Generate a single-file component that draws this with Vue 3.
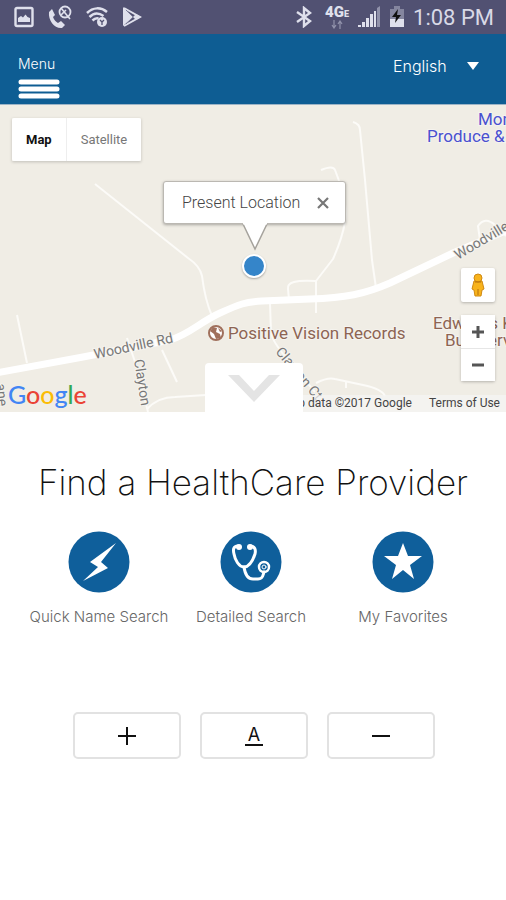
<template>
  <div class="page">
    <div class="statusbar">
      <div class="status-left">
        <svg class="icon" width="20" height="22" viewBox="0 0 20 22">
          <rect x="1.500" y="2" width="17" height="18" rx="1.500" fill="none" stroke="#dfe0ec" stroke-width="2.400" />
          <path d="M4 16v-4l3-2 2 1.500 2.500-3 2 2.500 2.500 1v4z" fill="#dfe0ec" />
        </svg>
        <svg class="icon" width="24" height="24" viewBox="0 0 24 24">
          <path d="M1 7l3-3 3 6-2 2c1 3 3 5 5 6l3-2 4 4-3 3C7 24 0 16 1 7z" fill="#dfe0ec" />
          <circle cx="17" cy="7" r="5.500" fill="none" stroke="#dfe0ec" stroke-width="1.800" />
          <path d="M13 3l9 11M13 10l5-5" stroke="#dfe0ec" stroke-width="1.600" />
        </svg>
        <svg class="icon" width="22" height="22" viewBox="0 0 22 22">
          <g fill="none" stroke="#dfe0ec" stroke-width="2.500">
            <path d="M1 7C7 1 15 1 21 6" />
            <path d="M3.500 11c4-4 9-4.500 14-1" />
            <path d="M6.500 14.500c2-2 4-2.500 6-2" />
          </g>
          <circle cx="16" cy="16" r="5" fill="#dfe0ec" />
          <path d="M14 14l2 2 2-2M16 16v3" fill="none" stroke="#515172" stroke-width="1.300" />
        </svg>
        <svg class="icon" width="20" height="22" viewBox="0 0 20 22">
          <path d="M1 1v19L11 11z" fill="#dfe0ec" />
          <path d="M2 2l16 9L2 20" fill="none" stroke="#dfe0ec" stroke-width="2" />
          <path d="M14 8l5 3-5 3-3-3z" fill="#dfe0ec" />
          <path d="M4 4l7 7-7 7" fill="none" stroke="#7d7e99" />
        </svg>
      </div>
      <div class="status-right">
        <svg class="icon" width="18" height="22" viewBox="0 0 18 22">
          <path d="M2 6l13 9-6 5V2l6 5L2 16" fill="none" stroke="#dfe0ec" stroke-width="2.400" />
        </svg>
        <div class="network">
          <span class="lte">4G<small>E</small></span>
          <svg width="12" height="9" viewBox="0 0 12 9">
            <path d="M3 0v8M1 5l2 3 2-3M9 9V1M7 4l2-3 2 3" fill="none" stroke="#9192ab" stroke-width="1.200" />
          </svg>
        </div>
        <svg class="icon" width="24" height="22" viewBox="0 0 24 22">
          <path d="M1 19h3v2H1zM5 16h3v5H5zM9 12h3v9H9zM13 8h3v13h-3zM17 5h2v16h-2z" fill="#dfe0ec" />
          <path d="M20 2l3-2v21h-3z" fill="#9192ab" />
        </svg>
        <svg class="icon" width="16" height="22" viewBox="0 0 16 22">
          <path d="M1 3h4V0h6v3h4v11H1z" fill="#85869f" />
          <path d="M1 13h14v8H1z" fill="#dfe0ec" />
          <path d="M9 3L3 11h4l-1 6 6-8H8z" fill="#111" />
        </svg>
        <span class="clock">1:08 PM</span>
      </div>
    </div>

    <header class="header">
      <button class="menu">
        <span>Menu</span>
        <svg width="42" height="20" viewBox="0 0 42 20">
          <path d="M3 3h36M3 10h36M3 17h36" stroke="#fff" stroke-width="5" stroke-linecap="round" />
        </svg>
      </button>
      <div class="language">
        <select v-model="language" aria-label="Language">
          <option>English</option>
          <option>Español</option>
        </select>
        <svg class="caret" width="12" height="8" viewBox="0 0 12 8"><path d="M0 0h12L6 8z" fill="#fff" /></svg>
      </div>
    </header>

    <section class="map">
      <svg class="roads" viewBox="0 105 506 307" preserveAspectRatio="xMinYMin slice">
        <g fill="none" stroke="#fcfbf8" stroke-width="2" stroke-linejoin="round">
          <path v-for="road in roads" :key="road" :d="road" />
        </g>
        <path d="M-4 373L83 357L170 340C190 334 200 322 220 313S245 302 262 301L310 299C345 298 365 294 390 283L453 253L510 229" fill="none" stroke="#fff" stroke-width="7" />
        <g class="street">
          <text transform="translate(95 359) rotate(-12)">Woodville Rd</text>
          <text transform="translate(458 260) rotate(-31)">Woodville Rd</text>
          <text transform="translate(134 360) rotate(81)">Clayton</text>
          <text transform="translate(275 352) rotate(50)">Clayton Ct</text>
          <text transform="translate(-4 384) rotate(84)">ane</text>
        </g>
        <g class="place">
          <text x="228" y="339">Positive Vision Records</text>
          <text x="433" y="329">Edwards K</text>
          <text x="445" y="346">Bus Service</text>
        </g>
        <g class="shop">
          <text x="478" y="125">Monroe</text>
          <text x="427" y="142">Produce &amp; More</text>
        </g>
        <circle cx="216" cy="333" r="7" fill="#fff" stroke="#a0705c" stroke-width="2" />
        <path d="M210 331l3-4 4 1-1 4 4 2 1 4-5 1-2-5zM218 328l4 3-2 1z" fill="#a0705c" />
      </svg>

      <div class="map-types">
        <button v-for="type in mapTypes" :key="type" :class="{ current: type === mapType }" @click="mapType = type">{{ type }}</button>
      </div>

      <div class="marker">
        <div v-if="showInfo" class="info">
          <span>Present Location</span>
          <button aria-label="Close" @click="showInfo = false">
            <svg width="12" height="12" viewBox="0 0 12 12"><path d="M1 1l10 10M11 1L1 11" stroke="#777" stroke-width="2.200" /></svg>
          </button>
          <svg class="tail" width="26" height="28" viewBox="0 0 26 28">
            <path d="M1 1l12 25L25 1" fill="#fff" stroke="#a5a29c" stroke-width="1.500" />
            <path d="M1 0h24" stroke="#fff" stroke-width="3" />
          </svg>
        </div>
        <div class="dot"></div>
      </div>

      <div class="controls">
        <button class="pegman" aria-label="Street View">
          <svg width="14" height="24" viewBox="0 0 14 24">
            <path d="M3 8h8l2 8-2 1-1 6H4l-1-6-2-1z" fill="#f8b31c" stroke="#cf8912" />
            <circle cx="7" cy="5" r="4" fill="#f8b31c" stroke="#cf8912" />
            <path d="M4 9h6M7 16v6" stroke="#b5700c" />
          </svg>
        </button>
        <div class="zoom">
          <button aria-label="Zoom in" @click="zoom++">
            <svg width="14" height="14" viewBox="0 0 14 14"><path d="M7 1v12M1 7h12" stroke="#555" stroke-width="3" /></svg>
          </button>
          <button aria-label="Zoom out" @click="zoom--">
            <svg width="14" height="14" viewBox="0 0 14 14"><path d="M1 7h12" stroke="#555" stroke-width="3" /></svg>
          </button>
        </div>
      </div>

      <div class="google"><span class="b">G</span><span class="r">o</span><span class="y">o</span><span class="b">g</span><span class="g">l</span><span class="r">e</span></div>
      <div class="legal">
        <span>Map data ©2017 Google</span>
        <a href="#">Terms of Use</a>
      </div>
      <button class="pull" aria-label="Expand map">
        <svg width="52" height="30" viewBox="0 0 52 30"><path d="M0 2h11l15 16L41 2h11L26 29z" fill="#e4e4e4" /></svg>
      </button>
    </section>

    <main class="content">
      <h1>Find a HealthCare Provider</h1>
      <nav class="searches">
        <a href="#">
          <svg width="62" height="62" viewBox="0 0 62 62">
            <circle cx="31" cy="31" r="30.500" fill="#0f5f9b" />
            <path d="M48 12L22 31l8 5-15 14 25-13-7-6z" fill="#fff" />
          </svg>
          <span>Quick Name Search</span>
        </a>
        <a href="#">
          <svg width="62" height="62" viewBox="0 0 62 62">
            <circle cx="31" cy="31" r="30.500" fill="#0f5f9b" />
            <g fill="none" stroke="#fff" stroke-width="3" stroke-linecap="round" stroke-linejoin="round">
              <path d="M18 15c-5 0-5 4-4 8 1 6 5 13 10 13s9-7 11-13c1-4 0-8-5-8" />
              <path d="M24 36c1 7 4 12 9 12h5c5 0 5-4 6-7" />
              <circle cx="44" cy="36" r="5" stroke-width="2.500" />
              <circle cx="44" cy="36" r="2" stroke-width="1" />
            </g>
            <circle cx="19" cy="16" r="3" fill="#fff" />
            <circle cx="30" cy="16" r="3" fill="#fff" />
          </svg>
          <span>Detailed Search</span>
        </a>
        <a href="#">
          <svg width="62" height="62" viewBox="0 0 62 62">
            <circle cx="31" cy="31" r="30.500" fill="#0f5f9b" />
            <path d="M31 12l5 13h14L38 34l4 14-11-9-11 9 4-14-12-9h14z" fill="#fff" />
          </svg>
          <span>My Favorites</span>
        </a>
      </nav>
      <div class="textsize">
        <button aria-label="Larger text">
          <svg width="18" height="18" viewBox="0 0 18 18"><path d="M9 0v18M0 9h18" stroke="#111" stroke-width="2" /></svg>
        </button>
        <button aria-label="Default text"><span class="letter">A</span></button>
        <button aria-label="Smaller text">
          <svg width="18" height="18" viewBox="0 0 18 18"><path d="M0 9h18" stroke="#111" stroke-width="2" /></svg>
        </button>
      </div>
    </main>
  </div>
</template>

<script setup>
import { ref } from 'vue'

const language = ref('English')
const mapTypes = ['Map', 'Satellite']
const mapType = ref('Map')
const showInfo = ref(true)
const zoom = ref(15)

// side roads, drawn under the main one
const roads = [
  'M17 315L27 363',
  'M95 184L188 258Q200 266 202 276Q205 300 212 316',
  'M353 122Q360 124 360 130L365 180L372 260L376 288',
  'M321 170Q333 165 335 170L338 178Q348 205 345 222T333 259L316 281V313',
  'M316 281Q286 279 288 289L289 300',
  'M270 304L271 332Q272 342 290 362L315 392',
  'M316 383Q328 377 335 379L363 385Q382 389 385 396M346 382V388',
  'M127 338L136 365L148 412',
  'M162 350L177 382',
  'M147 409Q158 397 175 397L206 395',
  'M480 240L478 226Q485 216 495 225L506 236'
]
</script>

<style>
body {
  margin: 0;
  background: #fff;
}
</style>

<style scoped>
.page {
  font-family: Roboto, "Liberation Sans", sans-serif;
  color: #111;
}
button {
  border: 0;
  padding: 0;
  margin: 0;
  background: #fff;
  font-family: inherit;
  display: flex;
  align-items: center;
  justify-content: center;
}
.statusbar {
  height: 34px;
  background: #515172;
  display: flex;
  justify-content: space-between;
  align-items: center;
  padding: 0 12px 0 14px;
}
.status-left {
  display: flex;
  align-items: center;
  gap: 14px;
}
.status-right {
  display: flex;
  align-items: center;
  gap: 8px;
}
.network {
  display: flex;
  flex-direction: column;
  align-items: center;
  padding-left: 4px;
}
.lte {
  font-size: 15px;
  line-height: 12px;
  font-weight: 900;
  color: #dfe0ec;
}
.lte small {
  font-size: 9px;
}
.clock {
  font-size: 22px;
  line-height: 34px;
  padding-top: 2px;
  color: #d8d9e6;
}
.header {
  height: 70px;
  background: #0e5d93;
  border-bottom: 1px solid #9db4c6;
  display: flex;
  justify-content: space-between;
  padding: 0 27px 0 18px;
  font-family: Inter, "Liberation Sans", sans-serif;
}
.menu {
  background: none;
  color: #fff;
  flex-direction: column;
  align-items: flex-start;
  justify-content: flex-start;
  padding-top: 21px;
  gap: 6px;
  font-size: 14px;
  line-height: 18px;
  font-weight: 300;
}
.language {
  display: flex;
  align-items: center;
  gap: 15px;
  padding-bottom: 6px;
}
.language select {
  appearance: none;
  border: 0;
  padding: 0;
  background: none;
  color: #fff;
  font-family: inherit;
  font-size: 16px;
  font-weight: 300;
}
.language option {
  color: #111;
}
.map {
  position: relative;
  height: 307px;
  overflow: hidden;
  background: #f0ede5;
}
.roads {
  display: block;
  width: 100%;
  height: 100%;
}
.roads text {
  paint-order: stroke;
  stroke: #f5f3ee;
  stroke-width: 2px;
}
.street text {
  font-size: 14px;
  fill: #777;
}
.place text {
  font-size: 17px;
  fill: #8d6453;
}
.shop text {
  font-size: 17px;
  fill: #4a50d0;
}
.map-types {
  position: absolute;
  top: 13px;
  left: 12px;
  display: flex;
  box-shadow: 0 1px 3px rgba(0, 0, 0, 0.2);
}
.map-types button {
  height: 43px;
  padding: 0 14px;
  font-size: 13px;
  color: #777;
  border-radius: 0 2px 2px 0;
}
.map-types .current {
  color: #111;
  font-weight: 700;
  border-right: 1px solid #eee;
  border-radius: 2px 0 0 2px;
}
.marker {
  position: absolute;
  top: 76px;
  left: 50%;
  width: 183px;
  height: 99px;
  margin-left: -90px;
}
.info {
  position: relative;
  height: 43px;
  box-sizing: border-box;
  display: flex;
  align-items: center;
  justify-content: space-between;
  padding: 0 16px 0 18px;
  background: #fff;
  border: 1px solid #bbb8b2;
  border-radius: 3px;
  box-shadow: 0 1px 3px rgba(0, 0, 0, 0.3);
  font-size: 16px;
  font-weight: 300;
  color: #444;
}
.tail {
  position: absolute;
  top: 41px;
  left: 78px;
}
.dot {
  position: absolute;
  left: 79px;
  bottom: 2px;
  width: 20px;
  height: 20px;
  border: 2px solid #fff;
  border-radius: 50%;
  background: #3585c9;
  box-shadow: 0 1px 2px rgba(0, 0, 0, 0.3);
}
.controls {
  position: absolute;
  top: 163px;
  right: 11px;
  display: flex;
  flex-direction: column;
  gap: 13px;
}
.pegman,
.zoom {
  width: 34px;
  box-shadow: 0 1px 3px rgba(0, 0, 0, 0.25);
  border-radius: 2px;
}
.pegman {
  height: 34px;
}
.zoom button {
  width: 34px;
  height: 33px;
}
.zoom button + button {
  border-top: 1px solid #e6e6e6;
}
.google {
  position: absolute;
  left: 8px;
  bottom: 4px;
  font-family: Lato, sans-serif;
  font-size: 25px;
  line-height: 28px;
  font-weight: 500;
}
.b { color: #4285f4; }
.r { color: #ea4335; }
.y { color: #fbbc05; }
.g { color: #34a853; }
.legal {
  position: absolute;
  right: 0;
  bottom: 0;
  display: flex;
  gap: 17px;
  padding: 0 6px;
  background: rgba(245, 245, 245, 0.7);
  font-size: 12px;
  line-height: 17px;
  color: #444;
}
.legal a {
  color: inherit;
  text-decoration: none;
}
.pull {
  position: absolute;
  left: 50%;
  bottom: 0;
  width: 98px;
  height: 49px;
  margin-left: -48px;
  border-radius: 4px 4px 0 0;
}
.content {
  padding: 45px 24px 24px;
  font-family: Inter, "Liberation Sans", sans-serif;
}
h1 {
  margin: 0;
  text-align: center;
  font-size: 35px;
  line-height: 50px;
  font-weight: 200;
  white-space: nowrap;
}
.searches {
  display: grid;
  grid-template-columns: repeat(3, 152px);
  justify-content: center;
  padding: 24px 4px 0 0;
}
.searches a {
  display: flex;
  flex-direction: column;
  align-items: center;
  gap: 14px;
  font-size: 15px;
  line-height: 20px;
  font-weight: 300;
  color: #666;
  text-decoration: none;
  white-space: nowrap;
}
.textsize {
  display: flex;
  justify-content: center;
  gap: 19px;
  padding: 85px 0 0 2px;
}
.textsize button {
  width: 108px;
  height: 47px;
  border: 2px solid #e2e2e2;
  border-radius: 5px;
}
.letter {
  width: 18px;
  border-bottom: 2px solid #111;
  font-size: 18px;
  line-height: 18px;
  color: #111;
}
</style>
